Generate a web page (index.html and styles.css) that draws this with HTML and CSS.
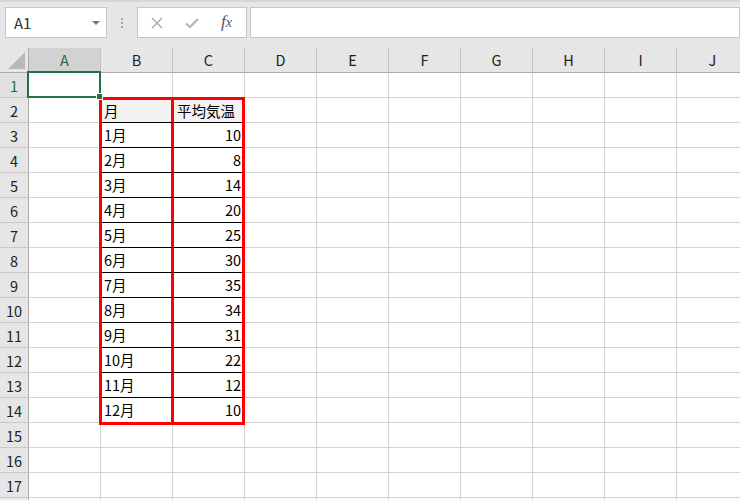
FILE: index.html
```html
<!DOCTYPE html>
<html lang="ja">
<head>
<meta charset="utf-8">
<title>Sheet</title>
<link rel="stylesheet" href="styles.css">
</head>
<body>
<div class="app">
  <div class="toolbar">
    <div class="namebox"><span class="ref">A1</span><span class="caret"></span></div>
    <div class="grip"><i></i><i></i><i></i></div>
    <div class="fxbox">
      <svg class="ico" width="14" height="14" viewBox="0 0 14 14"><path d="M2 2 L12 12 M12 2 L2 12" stroke="#a8a8a8" stroke-width="1.4" fill="none"/></svg>
      <svg class="ico" width="16" height="14" viewBox="0 0 16 14"><path d="M2 7.5 L6 11 L14 3" stroke="#b4b4b4" stroke-width="2.2" fill="none"/></svg>
      <span class="fx"><i>f</i><span>x</span></span>
    </div>
    <div class="input"></div>
  </div>
  <div class="grid">
    <div class="corner"><span class="tri"></span></div>
    <div class="ch sel">A</div><div class="ch">B</div><div class="ch">C</div><div class="ch">D</div><div class="ch">E</div><div class="ch">F</div><div class="ch">G</div><div class="ch">H</div><div class="ch">I</div><div class="ch">J</div>

    <div class="rh sel">1</div><div class="c a1"><span class="cursor"><span class="handle"></span></span></div><div class="c"></div><div class="c"></div><div class="c"></div><div class="c"></div><div class="c"></div><div class="c"></div><div class="c"></div><div class="c"></div><div class="c"></div>
    <div class="rh">2</div><div class="c"></div><div class="c"></div><div class="c"></div><div class="c"></div><div class="c"></div><div class="c"></div><div class="c"></div><div class="c"></div>
    <div class="rh">3</div><div class="c"></div><div class="c"></div><div class="c"></div><div class="c"></div><div class="c"></div><div class="c"></div><div class="c"></div><div class="c"></div>
    <div class="rh">4</div><div class="c"></div><div class="c"></div><div class="c"></div><div class="c"></div><div class="c"></div><div class="c"></div><div class="c"></div><div class="c"></div>
    <div class="rh">5</div><div class="c"></div><div class="c"></div><div class="c"></div><div class="c"></div><div class="c"></div><div class="c"></div><div class="c"></div><div class="c"></div>
    <div class="rh">6</div><div class="c"></div><div class="c"></div><div class="c"></div><div class="c"></div><div class="c"></div><div class="c"></div><div class="c"></div><div class="c"></div>
    <div class="rh">7</div><div class="c"></div><div class="c"></div><div class="c"></div><div class="c"></div><div class="c"></div><div class="c"></div><div class="c"></div><div class="c"></div>
    <div class="rh">8</div><div class="c"></div><div class="c"></div><div class="c"></div><div class="c"></div><div class="c"></div><div class="c"></div><div class="c"></div><div class="c"></div>
    <div class="rh">9</div><div class="c"></div><div class="c"></div><div class="c"></div><div class="c"></div><div class="c"></div><div class="c"></div><div class="c"></div><div class="c"></div>
    <div class="rh">10</div><div class="c"></div><div class="c"></div><div class="c"></div><div class="c"></div><div class="c"></div><div class="c"></div><div class="c"></div><div class="c"></div>
    <div class="rh">11</div><div class="c"></div><div class="c"></div><div class="c"></div><div class="c"></div><div class="c"></div><div class="c"></div><div class="c"></div><div class="c"></div>
    <div class="rh">12</div><div class="c"></div><div class="c"></div><div class="c"></div><div class="c"></div><div class="c"></div><div class="c"></div><div class="c"></div><div class="c"></div>
    <div class="rh">13</div><div class="c"></div><div class="c"></div><div class="c"></div><div class="c"></div><div class="c"></div><div class="c"></div><div class="c"></div><div class="c"></div>
    <div class="rh">14</div><div class="c"></div><div class="c"></div><div class="c"></div><div class="c"></div><div class="c"></div><div class="c"></div><div class="c"></div><div class="c"></div>
    <div class="rh">15</div><div class="c"></div><div class="c"></div><div class="c"></div><div class="c"></div><div class="c"></div><div class="c"></div><div class="c"></div><div class="c"></div><div class="c"></div><div class="c"></div>
    <div class="rh">16</div><div class="c"></div><div class="c"></div><div class="c"></div><div class="c"></div><div class="c"></div><div class="c"></div><div class="c"></div><div class="c"></div><div class="c"></div><div class="c"></div>
    <div class="rh">17</div><div class="c"></div><div class="c"></div><div class="c"></div><div class="c"></div><div class="c"></div><div class="c"></div><div class="c"></div><div class="c"></div><div class="c"></div><div class="c"></div>
    <div class="rh"></div><div class="c"></div><div class="c"></div><div class="c"></div><div class="c"></div><div class="c"></div><div class="c"></div><div class="c"></div><div class="c"></div><div class="c"></div><div class="c"></div>

    <div class="tbl">
      <div class="t head">月</div><div class="t head m">平均気温</div>
      <div class="t">1月</div><div class="t n">10</div>
      <div class="t">2月</div><div class="t n">8</div>
      <div class="t">3月</div><div class="t n">14</div>
      <div class="t">4月</div><div class="t n">20</div>
      <div class="t">5月</div><div class="t n">25</div>
      <div class="t">6月</div><div class="t n">30</div>
      <div class="t">7月</div><div class="t n">35</div>
      <div class="t">8月</div><div class="t n">34</div>
      <div class="t">9月</div><div class="t n">31</div>
      <div class="t">10月</div><div class="t n">22</div>
      <div class="t">11月</div><div class="t n">12</div>
      <div class="t last">12月</div><div class="t n last">10</div>
    </div>
  </div>
</div>
</body>
</html>
```
FILE: styles.css
```css
* { box-sizing: border-box; }
html, body { margin: 0; padding: 0; background: #fff; }
body {
  font-family: "Noto Sans CJK JP", "Noto Sans", sans-serif;
  font-size: 14.5px;
  color: #000;
  overflow: hidden;
  width: 740px;
  height: 500px;
}
.app { width: 740px; height: 500px; overflow: hidden; }

.toolbar {
  height: 48px;
  background: #e6e6e6;
  border-top: 2px solid #d6d6d6;
  display: flex;
  align-items: flex-start;
  padding: 5px 0 0 5px;
}
.namebox {
  width: 102px;
  height: 31px;
  background: #fff;
  border: 1px solid #c6c6c6;
  display: flex;
  align-items: center;
  justify-content: space-between;
  padding: 0 6px 0 8px;
  font-size: 15px;
  color: #333;
}
.caret {
  width: 0; height: 0;
  border-left: 4px solid transparent;
  border-right: 4px solid transparent;
  border-top: 4px solid #777;
}
.grip {
  width: 30px;
  height: 31px;
  display: flex;
  flex-direction: column;
  align-items: center;
  justify-content: center;
  gap: 2px;
}
.grip i { display: block; width: 2px; height: 2px; background: #aaa; }
.fxbox {
  width: 110px;
  height: 31px;
  background: #fff;
  border: 1px solid #c6c6c6;
  display: flex;
  align-items: center;
  padding-left: 12px;
  gap: 20px;
}
.fx {
  font-family: "Liberation Serif", serif;
  font-size: 17px;
  color: #555;
  margin-left: 1px;
  padding-bottom: 2px;
}
.fx i { font-style: italic; }
.fx span { font-style: italic; font-size: 14px; }
.input {
  flex: 1;
  height: 31px;
  margin-left: 3px;
  background: #fff;
  border: 1px solid #c6c6c6;
}

.grid {
  display: grid;
  grid-template-columns: 29px repeat(10, 72px);
  grid-auto-rows: 25px;
  width: 749px;
}
.corner, .ch, .rh, .c {
  border-right: 1px solid #d4d4d4;
  border-bottom: 1px solid #d4d4d4;
}
.corner {
  background: #e6e6e6;
  border-right-color: #ababab;
  border-bottom-color: #ababab;
  position: relative;
}
.tri {
  position: absolute;
  right: 3px;
  bottom: 3px;
  width: 0; height: 0;
  border-left: 17px solid transparent;
  border-bottom: 17px solid #b9b9b9;
}
.ch {
  background: #e6e6e6;
  border-right-color: #c3c3c3;
  border-bottom-color: #ababab;
  display: flex;
  align-items: center;
  justify-content: center;
  font-size: 14.5px;
  color: #222;
  padding-bottom: 1px;
}
.rh {
  background: #e6e6e6;
  border-right-color: #ababab;
  border-bottom-color: #c8c8c8;
  display: flex;
  align-items: center;
  justify-content: center;
  font-size: 14.5px;
  color: #222;
}
.ch.sel { background: #d2d2d2; color: #1e6b40; }
.rh.sel { background: #e1e1e1; color: #1e6b40; }
.c { background: #fff; }
.a1 { position: relative; }
.cursor {
  position: absolute;
  left: -2px; top: -2px; right: -1px; bottom: -1px;
  border: 2px solid #217346;
  z-index: 2;
}
.handle {
  position: absolute;
  right: -4px; bottom: -4px;
  width: 5px; height: 5px;
  background: #217346;
  border: 1px solid #fff;
  box-sizing: content-box;
}

.tbl {
  grid-column: 3 / span 2;
  grid-row: 3 / span 13;
  margin: -1px 0 -2px -2px;
  border: 3px solid #ff0000;
  display: grid;
  grid-template-columns: 72px 68px;
  grid-template-rows: 23px repeat(11, 25px) 24px;
  background: #fff;
  z-index: 1;
}
.t {
  border-bottom: 1px solid #000;
  display: flex;
  align-items: center;
  padding: 1px 2px 0 2px;
  line-height: 1;
  white-space: nowrap;
}
.t:nth-child(odd) { border-right: 3px solid #ff0000; }
.t.m { padding-left: 3px; }
.t.head { background: #f2f2f2; }
.t.n { justify-content: flex-end; padding-right: 1px; }
.t.last { border-bottom: none; }
```
